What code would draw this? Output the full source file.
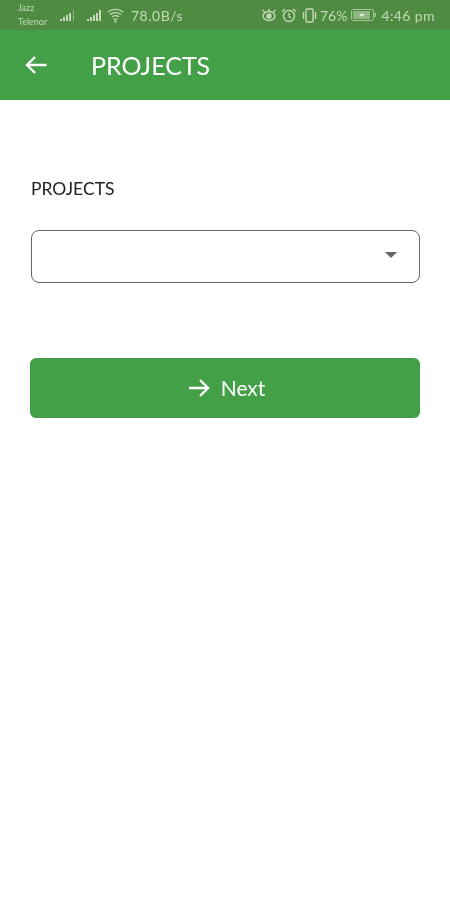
<template>
  <div class="page">
    <div class="status">
      <div class="status-left">
        <div class="carrier"><span>Jazz</span><span>Telenor</span></div>
        <svg class="signal first" width="17" height="13" viewBox="0 0 17 13">
          <path fill="#c3d8b8" d="M1 10h2v2H1zM4 8h2v4H4zM7 6h2v6H7zM10 4h2v8h-2z"/>
          <path fill="#8fb685" d="M14 1h1v11h-1z"/>
        </svg>
        <svg class="signal second" width="17" height="13" viewBox="0 0 17 13">
          <path fill="#c3d8b8" d="M1 10h2v2H1zM4 8h2v4H4zM7 6h2v6H7zM10 4h2v8h-2zM13 1h2v11h-2z"/>
        </svg>
        <svg class="wifi" width="17" height="15" viewBox="0 0 17 15" fill="none" stroke="#c3d8b8" stroke-width="1.300">
          <path d="M1 4C5 .5 12 .5 16 4M3 6.500C6 4 11 4 14 6.500M5 9C7 7.500 10 7.500 12 9M6.500 11.500c1-.7 3-.7 4 0"/>
          <path d="M7.500 13.500h2" stroke-width="2"/>
        </svg>
        <span class="speed">78.0B/s</span>
      </div>
      <div class="status-right">
        <svg class="eye" width="18" height="14" viewBox="0 0 17 14" fill="none" stroke="#c3d8b8" stroke-width="1.400">
          <path d="M2 2l2 2M15 2l-2 2M8.500 1v2"/>
          <ellipse cx="8.500" cy="8" rx="6" ry="4.500"/>
          <circle cx="8.500" cy="8" r="2" fill="#c3d8b8"/>
        </svg>
        <svg class="alarm" width="16" height="15" viewBox="0 0 16 15" fill="none" stroke="#c3d8b8" stroke-width="1.400">
          <circle cx="8" cy="8" r="5.500"/>
          <path d="M8 5v3.500l2 1.500M1 3.500L4 1M15 3.500L12 1"/>
        </svg>
        <svg class="vibrate" width="17" height="15" viewBox="0 0 17 15" fill="none" stroke="#c3d8b8" stroke-width="1.400">
          <rect x="5" y="1" width="7" height="13" rx="1"/>
          <path d="M2.500 4v7M14.500 4v7"/>
        </svg>
        <span class="pct">76%</span>
        <svg class="battery" width="26" height="12" viewBox="0 0 26 12">
          <rect x=".5" y=".5" width="22" height="11" rx="2" fill="none" stroke="#a9c79e"/>
          <rect x="2" y="2" width="17" height="8" rx="1" fill="#8fb685"/>
          <path fill="#e4eede" d="M12 3L8 7h3l-1 2 4-4h-3z"/>
          <rect x="23.500" y="4" width="1.500" height="4" fill="#a9c79e"/>
        </svg>
        <span class="time">4:46 pm</span>
      </div>
    </div>

    <header class="toolbar">
      <svg class="back" width="24" height="24" viewBox="0 0 24 24" fill="none" stroke="#fff" stroke-width="2.400">
        <path d="M22.500 12H3M11 4l-8 8 8 8"/>
      </svg>
      <h1 class="title">PROJECTS</h1>
    </header>

    <main class="content">
      <label class="label">PROJECTS</label>
      <div class="select">
        <span class="caret"></span>
      </div>
      <button class="next" type="button">
        <svg width="24" height="24" viewBox="0 0 24 24" fill="none" stroke="#fff" stroke-width="2.400">
          <path d="M2 12h19M13 4l8 8-8 8"/>
        </svg>
        <span class="next-text">Next</span>
      </button>
    </main>
  </div>
</template>

<style scoped>
.page {
  width: 450px;
  height: 900px;
  background: #fff;
  font-family: Lato, "Open Sans", sans-serif;
  overflow: hidden;
  filter: blur(.45px);
}
.status {
  height: 30px;
  background: #4f8c41;
  display: flex;
  align-items: center;
  justify-content: space-between;
  padding: 0 15px 0 18px;
  color: #c3d8b8;
  box-sizing: border-box;
}
.status-left, .status-right {
  display: flex;
  align-items: center;
}
.carrier {
  display: flex;
  flex-direction: column;
  font-size: 9px;
  line-height: 14px;
  width: 41px;
}
.signal.second { margin-left: 10px; }
.wifi { margin-left: 4px; }
.speed {
  font-size: 14px;
  letter-spacing: .5px;
  margin-left: 7px;
}
.alarm { margin-left: 3px; }
.vibrate { margin-left: 4px; }
.pct { font-size: 14px; margin-left: 2px; }
.battery { margin-left: 4px; }
.time { font-size: 14px; letter-spacing: .4px; margin-left: 4px; }
.toolbar {
  height: 70px;
  background: #43a047;
  display: flex;
  align-items: center;
  padding-left: 24px;
  box-sizing: border-box;
}
.title {
  margin: 0 0 0 43px;
  font-size: 25px;
  font-weight: 400;
  color: #fff;
}
.content {
  padding: 78px 30px 0;
  display: flex;
  flex-direction: column;
}
.label {
  font-size: 17.500px;
  line-height: 22px;
  margin-left: 1px;
  color: #222;
}
.select {
  margin-top: 30px;
  margin-left: .5px;
  height: 53px;
  border: 1.500px solid #666;
  border-radius: 8px;
  box-sizing: border-box;
  position: relative;
}
.caret {
  position: absolute;
  right: 22px;
  top: 21px;
  width: 0;
  height: 0;
  border-left: 6px solid transparent;
  border-right: 6px solid transparent;
  border-top: 6px solid #666;
}
.next {
  margin-top: 75px;
  height: 60px;
  background: #43a047;
  border: 0;
  border-radius: 6px;
  color: #fff;
  font: 400 21px Lato, sans-serif;
  display: flex;
  align-items: center;
  justify-content: center;
  gap: 10px;
  padding: 0 0 0 2px;
}
.next-text { margin-top: -2px; }
</style>
